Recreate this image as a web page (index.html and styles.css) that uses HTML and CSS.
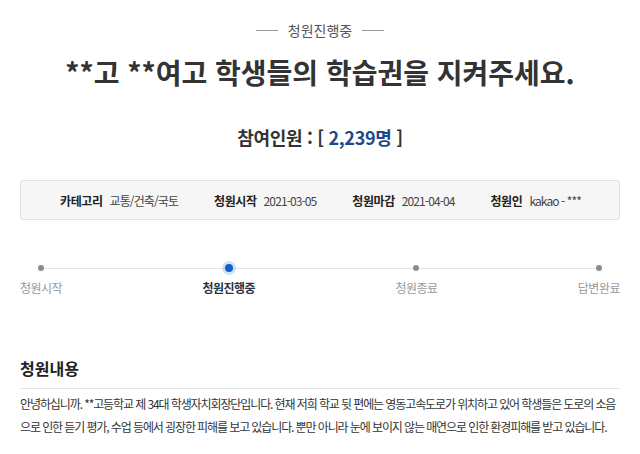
FILE: index.html
```html
<!DOCTYPE html>
<html lang="ko">
<head>
<meta charset="utf-8">
<link rel="stylesheet" href="styles.css">
</head>
<body>
<main class="page">
  <div class="status"><span class="dash"></span><span class="status-text">청원진행중</span><span class="dash"></span></div>
  <h1 class="title">**고 **여고 학생들의 학습권을 지켜주세요.</h1>
  <div class="count">참여인원 : [ <span class="num">2,239명</span> ]</div>
  <ul class="meta">
    <li><b>카테고리</b><span class="val">교통/건축/국토</span></li>
    <li><b>청원시작</b><span class="val">2021-03-05</span></li>
    <li><b>청원마감</b><span class="val">2021-04-04</span></li>
    <li><b>청원인</b><span class="val">kakao - ***</span></li>
  </ul>
  <div class="progress">
    <div class="track"></div>
    <div class="step"><span class="dot"></span><span class="label">청원시작</span></div>
    <div class="step active"><span class="dot"></span><span class="label">청원진행중</span></div>
    <div class="step"><span class="dot"></span><span class="label">청원종료</span></div>
    <div class="step"><span class="dot"></span><span class="label">답변완료</span></div>
  </div>
  <h2 class="section-title">청원내용</h2>
  <p class="content">안녕하십니까. **고등학교 제 34대 학생자치회장단입니다. 현재 저희 학교 뒷 편에는 영동고속도로가 위치하고 있어 학생들은 도로의 소음으로 인한 듣기 평가, 수업 등에서 굉장한 피해를 보고 있습니다. 뿐만 아니라 눈에 보이지 않는 매연으로 인한 환경피해를 받고 있습니다.</p>
</main>
</body>
</html>
```
FILE: styles.css
```css
* { box-sizing: border-box; }
html, body { margin: 0; padding: 0; background: #fff; }
body {
  font-family: "Noto Sans CJK KR", "Noto Sans", sans-serif;
  color: #333;
}
.page { padding: 19px 20px 0; }
.status {
  display: flex;
  justify-content: center;
  align-items: center;
  gap: 10px;
  font-size: 14px;
  color: #555;
  line-height: 22px;
}
.dash { width: 22px; height: 1px; background: #999; }
.title {
  margin: 13px 0 0;
  text-align: center;
  font-size: 28px;
  font-weight: 700;
  line-height: 36px;
  color: #333;
  letter-spacing: 0;
}
.count {
  margin-top: 34px;
  text-align: center;
  font-size: 18px;
  font-weight: 700;
  line-height: 26px;
  color: #333;
  letter-spacing: -0.3px;
}
.count .num { color: #1b4a8a; }
.meta {
  list-style: none;
  margin: 30px 0 0;
  padding: 0 0 0 39px;
  height: 40px;
  display: flex;
  align-items: center;
  gap: 36px;
  background: #f6f6f6;
  border: 1px solid #e2e2e2;
  border-radius: 3px;
  font-size: 12px;
  color: #444;
}
.meta li { display: flex; align-items: center; gap: 7px; }
.meta b { font-weight: 700; color: #222; letter-spacing: -0.4px; }
.meta .val { letter-spacing: -0.9px; }
.progress {
  position: relative;
  margin-top: 44px;
  display: flex;
  justify-content: space-between;
}
.track {
  position: absolute;
  left: 18px;
  right: 22px;
  top: 4px;
  height: 1px;
  background: #e3e3e3;
}
.step {
  display: flex;
  flex-direction: column;
  align-items: center;
  gap: 8px;
}
.dot {
  position: relative;
  width: 6px;
  height: 6px;
  margin-top: 1px;
  border-radius: 50%;
  background: #8c8c8c;
}
.label {
  font-size: 12px;
  color: #999;
  line-height: 18px;
  letter-spacing: -0.5px;
}
.step.active .dot {
  width: 8px;
  height: 8px;
  margin-top: 0;
  margin-bottom: -1px;
  background: #1560c8;
  box-shadow: 0 0 0 3px rgba(120, 170, 240, 0.35);
}
.step.active .label { color: #2a3548; font-weight: 700; }
.section-title {
  margin: 59px 0 0;
  font-size: 16px;
  font-weight: 700;
  line-height: 24px;
  padding-bottom: 8px;
  border-bottom: 1px solid #e4e4e4;
  color: #222;
}
.content {
  margin: 3px 0 0;
  font-size: 12px;
  line-height: 23px;
  color: #333;
  letter-spacing: -1.1px;
}
```
